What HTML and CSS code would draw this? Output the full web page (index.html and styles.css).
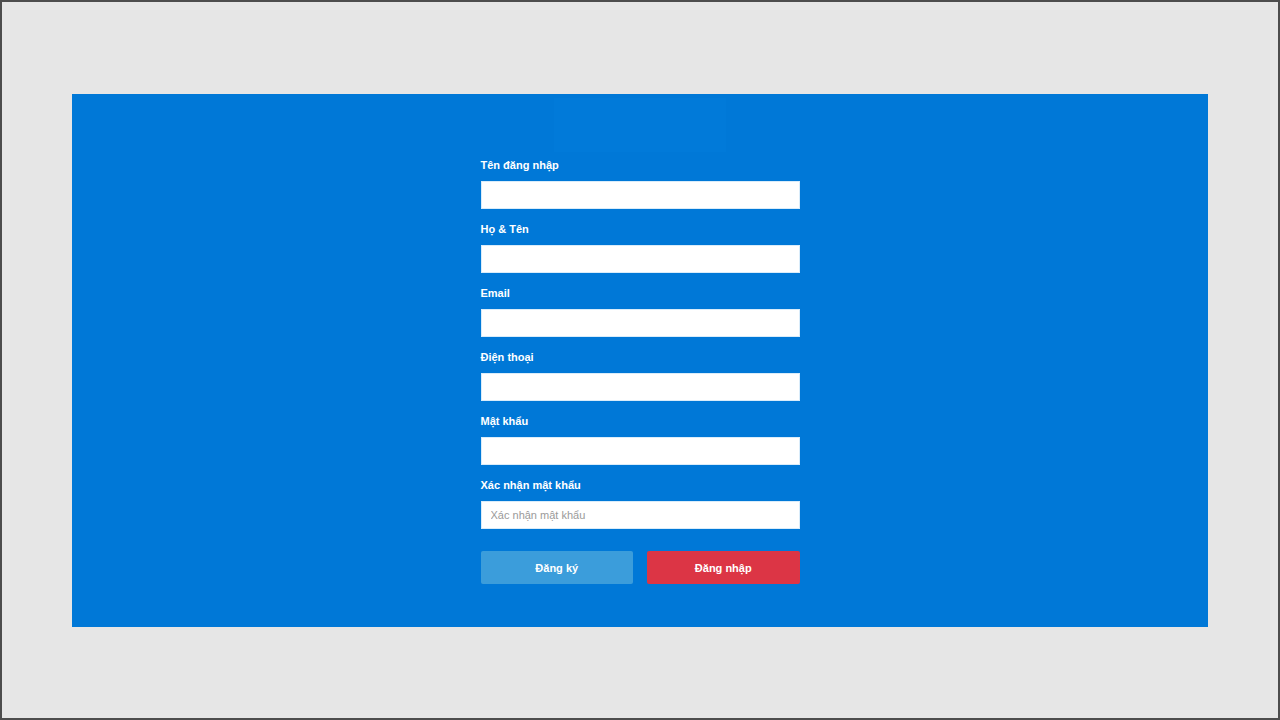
FILE: index.html
```html
<!DOCTYPE html>
<html lang="vi">
<head>
<meta charset="utf-8">
<title>Đăng ký</title>
<link rel="stylesheet" href="styles.css">
</head>
<body>
<div class="page">
  <main class="panel">
    <div class="logo"></div>
    <form class="form">
      <div class="group">
        <label class="label">Tên đăng nhập</label>
        <input class="input" type="text">
      </div>
      <div class="group">
        <label class="label">Họ &amp; Tên</label>
        <input class="input" type="text">
      </div>
      <div class="group">
        <label class="label">Email</label>
        <input class="input" type="text">
      </div>
      <div class="group">
        <label class="label">Điện thoại</label>
        <input class="input" type="text">
      </div>
      <div class="group">
        <label class="label">Mật khẩu</label>
        <input class="input" type="password">
      </div>
      <div class="group">
        <label class="label">Xác nhận mật khẩu</label>
        <input class="input" type="password" placeholder="Xác nhận mật khẩu">
      </div>
      <div class="actions">
        <button class="btn btn-blue" type="button">Đăng ký</button>
        <button class="btn btn-red" type="button">Đăng nhập</button>
      </div>
    </form>
  </main>
</div>
</body>
</html>
```

FILE: styles.css
```css
html, body {
  margin: 0;
  padding: 0;
}
body {
  width: 1280px;
  height: 720px;
  box-sizing: border-box;
  border: 2px solid #4d4d4d;
  background: #e6e6e6;
  font-family: "Liberation Sans", Arial, sans-serif;
  overflow: hidden;
}
.page {
  padding: 92px 70px 0 70px;
}
.panel {
  background: #0078d7;
  height: 533px;
  display: flex;
  flex-direction: column;
  align-items: center;
  box-sizing: border-box;
  padding-top: 4px;
}
.logo {
  width: 172px;
  height: 54px;
  background: #017ad9;
  margin-bottom: 6px;
}
.form {
  width: 319px;
  display: flex;
  flex-direction: column;
}
.group {
  display: flex;
  flex-direction: column;
  margin-bottom: 13px;
}
.label {
  color: #fff;
  font-weight: bold;
  font-size: 11px;
  line-height: 14px;
  margin-bottom: 9px;
}
.input {
  height: 28px;
  box-sizing: border-box;
  border: 1px solid #d9ecfa;
  background: #fff;
  padding: 0 9px;
  font-family: "Liberation Sans", Arial, sans-serif;
  font-size: 11px;
  outline: none;
  margin: 0;
}
.input::placeholder {
  color: #9a9a9a;
}
.actions {
  display: flex;
  gap: 14px;
  margin-top: 9px;
}
.btn {
  flex: 1;
  height: 33px;
  border: none;
  border-radius: 2px;
  color: #fff;
  font-family: "Liberation Sans", Arial, sans-serif;
  font-weight: bold;
  font-size: 11px;
  cursor: pointer;
}
.btn-blue {
  background: #3b9ddb;
}
.btn-red {
  background: #dc3545;
}
```
